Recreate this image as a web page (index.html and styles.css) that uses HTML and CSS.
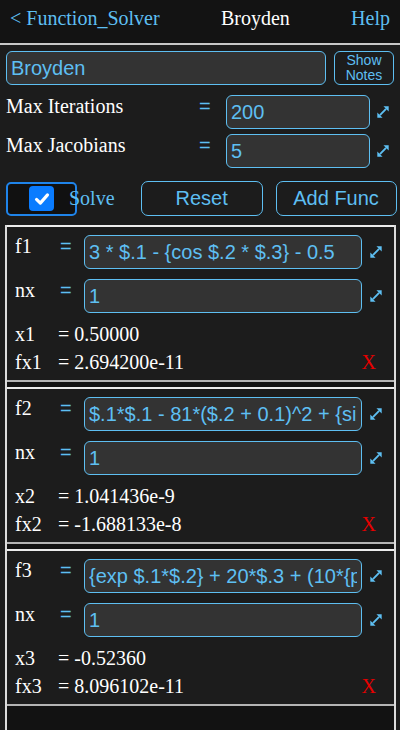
FILE: index.html
```html
<!DOCTYPE html>
<html>
<head>
<meta charset="utf-8">
<link rel="stylesheet" href="styles.css">
</head>
<body>
<div class="header">
  <span class="nav-link">&lt; Function_Solver</span>
  <span class="title">Broyden</span>
  <span class="nav-link">Help</span>
</div>

<div class="name-row">
  <input class="field name-field" value="Broyden">
  <button class="notes-btn">Show<br>Notes</button>
</div>

<div class="param-row">
  <span class="label">Max Iterations</span>
  <span class="eq">=</span>
  <input class="field" value="200">
  <svg class="expand" viewBox="0 0 16 16"><path d="M4.5 11.5 L11.5 4.5" stroke="currentColor" stroke-width="2.2"/><path d="M8.5 1.5 H14.5 V7.5 Z M1.5 8.5 V14.5 H7.5 Z" fill="currentColor"/></svg>
</div>
<div class="param-row">
  <span class="label">Max Jacobians</span>
  <span class="eq">=</span>
  <input class="field" value="5">
  <svg class="expand" viewBox="0 0 16 16"><path d="M4.5 11.5 L11.5 4.5" stroke="currentColor" stroke-width="2.2"/><path d="M8.5 1.5 H14.5 V7.5 Z M1.5 8.5 V14.5 H7.5 Z" fill="currentColor"/></svg>
</div>

<div class="action-row">
  <span class="check-wrap"><span class="check-box"><svg viewBox="0 0 24 24"><path d="M6 12.5 L10.2 16.5 L18 7.5" fill="none" stroke="#fff" stroke-width="3.4" stroke-linecap="round" stroke-linejoin="round"/></svg></span></span>
  <span class="solve-label">Solve</span>
  <button class="btn reset-btn">Reset</button>
  <button class="btn add-btn">Add Func</button>
</div>

<div class="func-list">
  <div class="func-panel">
    <div class="in-row">
      <span class="label">f1</span><span class="eq">=</span>
      <input class="field" value="3 * $.1 - {cos $.2 * $.3} - 0.5">
      <svg class="expand" viewBox="0 0 16 16"><path d="M4.5 11.5 L11.5 4.5" stroke="currentColor" stroke-width="2.2"/><path d="M8.5 1.5 H14.5 V7.5 Z M1.5 8.5 V14.5 H7.5 Z" fill="currentColor"/></svg>
    </div>
    <div class="in-row">
      <span class="label">nx</span><span class="eq">=</span>
      <input class="field" value="1">
      <svg class="expand" viewBox="0 0 16 16"><path d="M4.5 11.5 L11.5 4.5" stroke="currentColor" stroke-width="2.2"/><path d="M8.5 1.5 H14.5 V7.5 Z M1.5 8.5 V14.5 H7.5 Z" fill="currentColor"/></svg>
    </div>
    <div class="out-row"><span class="label">x1</span><span class="value">= 0.50000</span></div>
    <div class="out-row"><span class="label">fx1</span><span class="value">= 2.694200e-11</span><span class="del">X</span></div>
  </div>

  <div class="func-panel">
    <div class="in-row">
      <span class="label">f2</span><span class="eq">=</span>
      <input class="field" value="$.1*$.1 - 81*($.2 + 0.1)^2 + {sin $.3} + 1.06">
      <svg class="expand" viewBox="0 0 16 16"><path d="M4.5 11.5 L11.5 4.5" stroke="currentColor" stroke-width="2.2"/><path d="M8.5 1.5 H14.5 V7.5 Z M1.5 8.5 V14.5 H7.5 Z" fill="currentColor"/></svg>
    </div>
    <div class="in-row">
      <span class="label">nx</span><span class="eq">=</span>
      <input class="field" value="1">
      <svg class="expand" viewBox="0 0 16 16"><path d="M4.5 11.5 L11.5 4.5" stroke="currentColor" stroke-width="2.2"/><path d="M8.5 1.5 H14.5 V7.5 Z M1.5 8.5 V14.5 H7.5 Z" fill="currentColor"/></svg>
    </div>
    <div class="out-row"><span class="label">x2</span><span class="value">= 1.041436e-9</span></div>
    <div class="out-row"><span class="label">fx2</span><span class="value">= -1.688133e-8</span><span class="del">X</span></div>
  </div>

  <div class="func-panel">
    <div class="in-row">
      <span class="label">f3</span><span class="eq">=</span>
      <input class="field" value="{exp $.1*$.2} + 20*$.3 + (10*{pi} - 3)/3">
      <svg class="expand" viewBox="0 0 16 16"><path d="M4.5 11.5 L11.5 4.5" stroke="currentColor" stroke-width="2.2"/><path d="M8.5 1.5 H14.5 V7.5 Z M1.5 8.5 V14.5 H7.5 Z" fill="currentColor"/></svg>
    </div>
    <div class="in-row">
      <span class="label">nx</span><span class="eq">=</span>
      <input class="field" value="1">
      <svg class="expand" viewBox="0 0 16 16"><path d="M4.5 11.5 L11.5 4.5" stroke="currentColor" stroke-width="2.2"/><path d="M8.5 1.5 H14.5 V7.5 Z M1.5 8.5 V14.5 H7.5 Z" fill="currentColor"/></svg>
    </div>
    <div class="out-row"><span class="label">x3</span><span class="value">= -0.52360</span></div>
    <div class="out-row"><span class="label">fx3</span><span class="value">= 8.096102e-11</span><span class="del">X</span></div>
  </div>
</div>
</body>
</html>
```

FILE: styles.css
```css
* { box-sizing: border-box; }

html, body {
  margin: 0;
  padding: 0;
}

body {
  width: 400px;
  height: 730px;
  overflow: hidden;
  display: flex;
  flex-direction: column;
  background: #1c1c1c;
  color: #ffffff;
  font-family: "Liberation Serif", "Times New Roman", serif;
  font-size: 20px;
}

.header {
  flex: 0 0 auto;
  height: 45px;
  display: flex;
  justify-content: space-between;
  align-items: flex-start;
  padding: 7px 10px 0 10px;
  background: #131313;
  border-bottom: 2px solid #c8c8c8;
  line-height: 23px;
}

.nav-link { color: #5ebff2; }
.title { color: #ffffff; }

.field {
  display: block;
  width: 100%;
  height: 34px;
  margin: 0;
  padding: 0 4px;
  border: 1px solid #5ebff2;
  border-radius: 6px;
  background: #333333;
  color: #5ebff2;
  font-family: "Liberation Sans", Arial, sans-serif;
  font-size: 20px;
  outline: none;
}

.name-row {
  display: flex;
  gap: 8px;
  margin: 6px 6px 0 6px;
}

.name-field { flex: 1 1 auto; width: auto; }

.notes-btn {
  flex: 0 0 60px;
  height: 34px;
  margin: 0;
  padding: 0;
  border: 1px solid #5ebff2;
  border-radius: 6px;
  background: #1c1c1c;
  color: #5ebff2;
  font-family: "Liberation Sans", Arial, sans-serif;
  font-size: 14px;
  line-height: 15px;
}

.param-row {
  display: grid;
  grid-template-columns: 1fr 32px 144px 26px;
  align-items: start;
  margin: 0 4px 0 6px;
}

.param-row + .param-row { margin-top: 5px; }
.name-row + .param-row { margin-top: 10px; }

.label {
  line-height: 23px;
  color: #ffffff;
}

.eq {
  color: #5ebff2;
  font-family: "Liberation Sans", Arial, sans-serif;
  line-height: 23px;
  padding-left: 5px;
}

.expand {
  width: 14px;
  height: 14px;
  align-self: center;
  justify-self: center;
  color: #5ebff2;
}

.action-row {
  display: flex;
  align-items: center;
  height: 35px;
  margin: 13px 0 0 6px;
}

.check-wrap {
  flex: 0 0 71px;
  height: 34px;
  display: flex;
  align-items: center;
  justify-content: center;
  border: 2px solid #1f84ea;
  border-radius: 5px;
  background: #111111;
}

.check-box {
  width: 25px;
  height: 25px;
  border-radius: 4px;
  background: #0a7cff;
  display: flex;
  align-items: center;
  justify-content: center;
}

.check-box svg { width: 22px; height: 22px; }

.solve-label {
  margin-left: -8px;
  color: #5ebff2;
  line-height: 23px;
}

.btn {
  height: 35px;
  margin: 0;
  padding: 0;
  border: 1px solid #5ebff2;
  border-radius: 7px;
  background: #1c1c1c;
  color: #5ebff2;
  font-family: "Liberation Sans", Arial, sans-serif;
  font-size: 20px;
}

.reset-btn { flex: 0 0 122px; margin-left: 26px; }
.add-btn { flex: 0 0 121px; margin-left: 13px; }

.func-list {
  flex: 1 1 auto;
  margin: 9px 4px 0 5px;
  border-left: 2px solid #dcdcdc;
  border-right: 2px solid #dcdcdc;
  background: #121212;
  display: flex;
  flex-direction: column;
  gap: 5px;
}

.func-panel {
  background: #1c1c1c;
  border-top: 2px solid #ececec;
  border-bottom: 2px solid #b4b4b4;
  padding: 8px 4px 4px 8px;
}

.in-row {
  display: grid;
  grid-template-columns: 45px 24px 1fr 28px;
  align-items: start;
}

.in-row + .in-row { margin-top: 10px; }

.in-row .eq { padding-left: 0; }

.out-row {
  display: grid;
  grid-template-columns: 43px 1fr auto;
  line-height: 28px;
}

.in-row + .out-row { margin-top: 7px; }

.out-row .label { line-height: 28px; }

.value { color: #ffffff; }

.del {
  color: #e60000;
  margin-right: 14px;
}
```
